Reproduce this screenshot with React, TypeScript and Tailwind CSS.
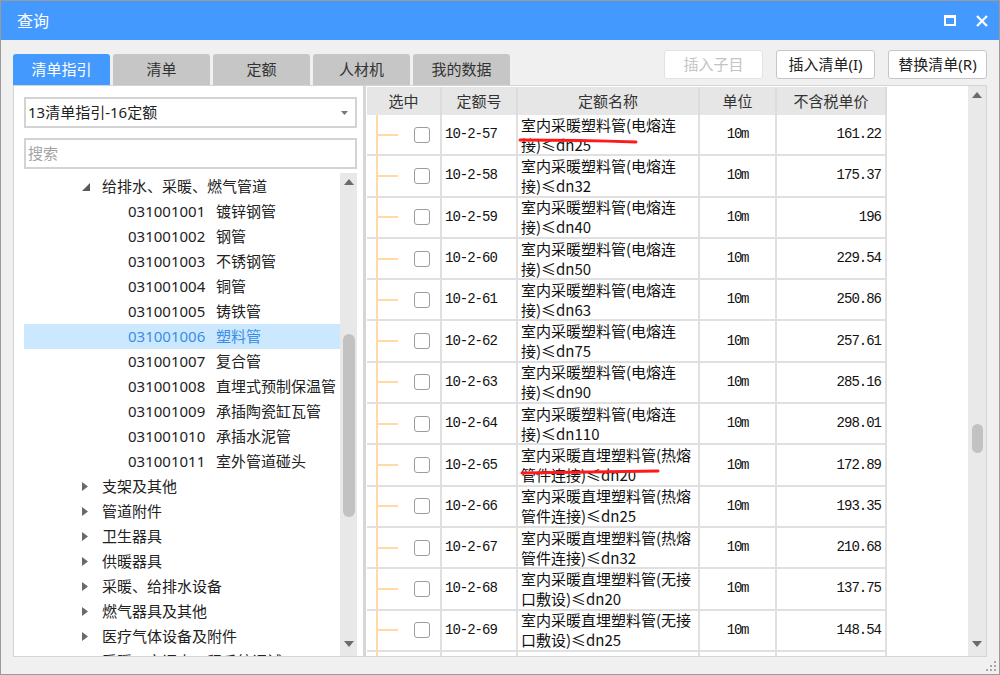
import React from "react";

const rows: [string, string, string, string][] = [
  ["10-2-57", "室内采暖塑料管(电熔连", "接)≤dn25", "161.22"],
  ["10-2-58", "室内采暖塑料管(电熔连", "接)≤dn32", "175.37"],
  ["10-2-59", "室内采暖塑料管(电熔连", "接)≤dn40", "196"],
  ["10-2-60", "室内采暖塑料管(电熔连", "接)≤dn50", "229.54"],
  ["10-2-61", "室内采暖塑料管(电熔连", "接)≤dn63", "250.86"],
  ["10-2-62", "室内采暖塑料管(电熔连", "接)≤dn75", "257.61"],
  ["10-2-63", "室内采暖塑料管(电熔连", "接)≤dn90", "285.16"],
  ["10-2-64", "室内采暖塑料管(电熔连", "接)≤dn110", "298.01"],
  ["10-2-65", "室内采暖直埋塑料管(热熔", "管件连接)≤dn20", "172.89"],
  ["10-2-66", "室内采暖直埋塑料管(热熔", "管件连接)≤dn25", "193.35"],
  ["10-2-67", "室内采暖直埋塑料管(热熔", "管件连接)≤dn32", "210.68"],
  ["10-2-68", "室内采暖直埋塑料管(无接", "口敷设)≤dn20", "137.75"],
  ["10-2-69", "室内采暖直埋塑料管(无接", "口敷设)≤dn25", "148.54"],
  ["", "", "", ""],
];

const children: [string, string][] = [
  ["031001001", "镀锌钢管"],
  ["031001002", "钢管"],
  ["031001003", "不锈钢管"],
  ["031001004", "铜管"],
  ["031001005", "铸铁管"],
  ["031001006", "塑料管"],
  ["031001007", "复合管"],
  ["031001008", "直埋式预制保温管"],
  ["031001009", "承插陶瓷缸瓦管"],
  ["031001010", "承插水泥管"],
  ["031001011", "室外管道碰头"],
];

const collapsed = [
  "支架及其他",
  "管道附件",
  "卫生器具",
  "供暖器具",
  "采暖、给排水设备",
  "燃气器具及其他",
  "医疗气体设备及附件",
  "采暖、空调水工程系统调试",
];

function UpArrow() {
  return (
    <svg width="10" height="6" viewBox="0 0 10 6">
      <polygon points="0,6 5,0 10,6" fill="#6b6b6b" />
    </svg>
  );
}
function DownArrow() {
  return (
    <svg width="10" height="6" viewBox="0 0 10 6">
      <polygon points="0,0 10,0 5,6" fill="#6b6b6b" />
    </svg>
  );
}

export default function App() {
  const tabs = ["清单指引", "清单", "定额", "人材机", "我的数据"];
  return (
    <div className="relative w-[1000px] h-[675px] bg-[#f0f0f0] border border-[#9a9a9a] flex flex-col overflow-hidden font-['Noto_Sans','Noto_Sans_CJK_SC',sans-serif] text-[#222]">
      {/* Title bar */}
      <div className="h-[39px] shrink-0 bg-[#4499ff] flex items-center pl-[16px] pr-[11px]">
        <span className="text-white text-[16px] leading-none">查询</span>
        <div className="ml-auto flex items-center gap-[20px]">
          <svg width="12" height="11" viewBox="0 0 12 11">
            <rect x="1" y="1.5" width="10" height="8.5" fill="none" stroke="#fff" strokeWidth="2" />
            <rect x="0" y="0" width="12" height="3" fill="#fff" />
          </svg>
          <svg width="12" height="12" viewBox="0 0 12 12">
            <path d="M1 1 L11 11 M11 1 L1 11" stroke="#fff" strokeWidth="2.2" />
          </svg>
        </div>
      </div>

      {/* Tabs row */}
      <div className="h-[45px] shrink-0 flex items-end px-[12px]">
        <div className="flex gap-[3px]">
          {tabs.map((t, i) => (
            <div
              key={t}
              className={
                i === 0
                  ? "w-[97px] h-[31px] rounded-t-[3px] bg-[#4499ff] text-white text-[15px] flex items-center justify-center"
                  : "w-[97px] h-[31px] rounded-t-[3px] bg-[#c6c6c6] text-[#333] text-[15px] flex items-center justify-center"
              }
            >
              {t}
            </div>
          ))}
        </div>
        <div className="ml-auto self-start mt-[10px] flex gap-[13px]">
          <div className="w-[99px] h-[29px] bg-white border border-[#e2e2e2] rounded-[3px] flex items-center justify-center text-[15px] text-[#c4c4c4]">
            插入子目
          </div>
          <div className="w-[99px] h-[29px] bg-white border border-[#c6c6c6] rounded-[3px] flex items-center justify-center text-[15px] text-[#222]">
            插入清单(I)
          </div>
          <div className="w-[99px] h-[29px] bg-white border border-[#c6c6c6] rounded-[3px] flex items-center justify-center text-[15px] text-[#222]">
            替换清单(R)
          </div>
        </div>
      </div>

      {/* Main */}
      <div className="h-[572px] shrink-0 mx-[12px] bg-white border border-[#d4d4d4] flex">
        {/* Left panel */}
        <div className="w-[349px] flex flex-col pl-[10px] pr-[6px] pt-[11px]">
          <div className="h-[31px] border-2 border-[#d3d3d3] flex items-center pl-[2px] pr-[7px] text-[15px]">
            <span>13清单指引-16定额</span>
            <svg className="ml-auto" width="7" height="4" viewBox="0 0 7 4">
              <polygon points="0,0 7,0 3.5,4" fill="#777" />
            </svg>
          </div>
          <div className="mt-[10px] h-[31px] border-2 border-[#d3d3d3] flex items-center pl-[2px] text-[15px] text-[#a3a3a3]">
            搜索
          </div>
          <div className="mt-[4px] flex-1 flex min-h-0">
            <div className="flex-1 overflow-hidden pt-[1px] text-[15px]">
              <div className="h-[25px] flex items-center pl-[58px]">
                <div className="w-[20px] flex items-center">
                  <svg width="8" height="8" viewBox="0 0 8 8">
                    <polygon points="8,0 8,8 0,8" fill="#5a5a5a" />
                  </svg>
                </div>
                <span>给排水、采暖、燃气管道</span>
              </div>
              {children.map(([c, n]) => {
                const sel = c === "031001006";
                return (
                  <div
                    key={c}
                    className={
                      sel
                        ? "h-[25px] flex items-center pl-[104px] bg-[#cce8ff] text-[#3a8ee6]"
                        : "h-[25px] flex items-center pl-[104px]"
                    }
                  >
                    <span className="w-[88px]">{c}</span>
                    <span className="whitespace-nowrap">{n}</span>
                  </div>
                );
              })}
              {collapsed.map((n) => (
                <div key={n} className="h-[25px] flex items-center pl-[58px]">
                  <div className="w-[20px] flex items-center">
                    <svg width="6" height="9" viewBox="0 0 6 9">
                      <polygon points="0,0 6,4.5 0,9" fill="#6a6a6a" />
                    </svg>
                  </div>
                  <span className="whitespace-nowrap">{n}</span>
                </div>
              ))}
            </div>
            <div className="w-[17px] bg-[#e8e8e8] flex flex-col items-center">
              <div className="h-[17px] flex items-center justify-center">
                <UpArrow />
              </div>
              <div className="flex-1 flex flex-col items-center">
                <div className="mt-[144px] w-[12px] h-[183px] rounded-full bg-[#c2c2c2]" />
              </div>
              <div className="h-[15px] flex items-start justify-center">
                <DownArrow />
              </div>
            </div>
          </div>
        </div>

        {/* Splitter */}
        <div className="w-[3px] bg-[#d6d6d6]" />

        {/* Right panel */}
        <div className="flex-1 flex min-w-0">
          <div className="flex-1 pl-[1px] pt-[1px] overflow-hidden">
            <div className="w-[520px] flex h-[28px] bg-[#e6e6e6] text-[15px] text-[#333]">
              <div className="w-[75px] border-r-2 border-[#dcdcdc] flex items-center justify-center">选中</div>
              <div className="w-[76px] border-r-2 border-[#dcdcdc] flex items-center justify-center">定额号</div>
              <div className="w-[182px] border-r-2 border-[#dcdcdc] flex items-center justify-center">定额名称</div>
              <div className="w-[77px] border-r-2 border-[#dcdcdc] flex items-center justify-center">单位</div>
              <div className="w-[110px] border-r-2 border-[#dcdcdc] flex items-center justify-center">不含税单价</div>
            </div>
            <div className="w-[520px]">
              {rows.map((r, i) => (
                <div key={i} className="w-[520px] h-[41.3px] flex border-b-2 border-[#e0e0e0]">
                  <div className="w-[75px] border-r-2 border-[#e0e0e0] flex items-center pl-[9px]">
                    <div className="w-[2px] self-stretch bg-[#ffd9a6]" />
                    {r[0] && (
                      <>
                        <div className="w-[20px] h-[2px] bg-[#ffd9a6]" />
                        <div className="ml-[16px] w-[16px] h-[16px] border border-[#9c9c9c] rounded-[3px] bg-white" />
                      </>
                    )}
                  </div>
                  <div className="w-[76px] border-r-2 border-[#e0e0e0] flex items-center pl-[3px] font-['Liberation_Mono',monospace] text-[14px] tracking-[-1px] text-[#111]">
                    {r[0]}
                  </div>
                  <div className="w-[182px] border-r-2 border-[#e0e0e0] flex flex-col justify-center pl-[3px] text-[15px] leading-[20px] text-[#111] font-['Noto_Sans_CJK_SC',sans-serif] overflow-hidden whitespace-nowrap">
                    <span>{r[1]}</span>
                    <span>{r[2]}</span>
                  </div>
                  <div className="w-[77px] border-r-2 border-[#e0e0e0] flex items-center justify-center font-['Liberation_Mono',monospace] text-[14px] tracking-[-1.2px] text-[#111]">
                    {r[0] ? "10m" : ""}
                  </div>
                  <div className="w-[110px] border-r-2 border-[#e0e0e0] flex items-center justify-end pr-[4px] font-['Liberation_Mono',monospace] text-[14px] tracking-[-1px] text-[#111]">
                    {r[3]}
                  </div>
                </div>
              ))}
            </div>
          </div>
          <div className="w-[18px] bg-[#e9e9e9] flex flex-col items-center">
            <div className="h-[17px] flex items-center justify-center">
              <UpArrow />
            </div>
            <div className="flex-1 flex flex-col items-center">
              <div className="mt-[321px] w-[11px] h-[29px] rounded-full bg-[#c2c2c2]" />
            </div>
            <div className="h-[15px] flex items-start justify-center">
              <DownArrow />
            </div>
          </div>
        </div>
      </div>

      {/* Bottom strip */}
      <div className="flex-1 flex items-end justify-end pr-[3px] pb-[3px]">
        <svg width="10" height="10" viewBox="0 0 10 10">
          <rect x="8" y="0" width="2" height="2" fill="#a8a8a8" />
          <rect x="4" y="4" width="2" height="2" fill="#a8a8a8" />
          <rect x="8" y="4" width="2" height="2" fill="#a8a8a8" />
          <rect x="0" y="8" width="2" height="2" fill="#a8a8a8" />
          <rect x="4" y="8" width="2" height="2" fill="#a8a8a8" />
          <rect x="8" y="8" width="2" height="2" fill="#a8a8a8" />
        </svg>
      </div>

      {/* Red annotation marks */}
      <svg className="absolute left-[-1px] top-[-1px] pointer-events-none" width="1000" height="675" viewBox="0 0 1000 675">
        <path d="M520 140 Q580 140 636 142" stroke="#ff1a1a" strokeWidth="3" fill="none" strokeLinecap="round" />
        <path d="M522 473 Q590 472 658 471" stroke="#ff1a1a" strokeWidth="3" fill="none" strokeLinecap="round" />
      </svg>
    </div>
  );
}
